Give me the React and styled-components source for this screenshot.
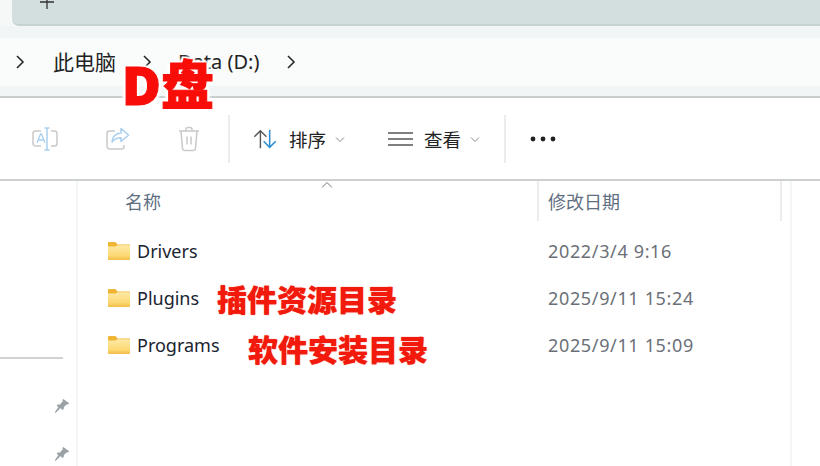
import React from 'react'
import styled, { createGlobalStyle } from 'styled-components'

const CJK = `"Noto Sans", "Noto Sans CJK SC", sans-serif`

const GlobalStyle = createGlobalStyle`
  html, body {
    margin: 0;
    padding: 0;
    background: #fff;
    overflow: hidden;
  }
  * {
    box-sizing: border-box;
  }
`

const Page = styled.div`
  position: relative;
  width: 820px;
  height: 466px;
  overflow: hidden;
  font-family: ${CJK};
  background: #fff;
`

const TabStrip = styled.div`
  height: 26px;
  padding-left: 12px;
  background: #f6f8f8;
`

const TabBody = styled.div`
  height: 26px;
  padding-left: 27px;
  overflow: hidden;
  background: #d3dedf;
  border-bottom: 2px solid #c6d1d1;
  border-bottom-left-radius: 7px;
  svg {
    display: block;
    margin-top: -6px;
  }
`

const AddressBand = styled.div`
  height: 72px;
  padding: 12px 0 10px;
  background: #f1f5f5;
  border-bottom: 2px solid #c9cdcd;
`

const AddressBar = styled.div`
  height: 48px;
  display: flex;
  align-items: center;
  padding-left: 15px;
  background: #fafcfc;
  color: #222;
`

const Crumb = styled.span`
  margin: 0 0 2px ${p => p.$left}px;
  font-size: ${p => p.$size}px;
  white-space: nowrap;
`

const Chevron = styled.svg`
  display: block;
  flex: none;
  margin-left: ${p => p.$left || 0}px;
`

const Toolbar = styled.div`
  height: 83px;
  display: flex;
  align-items: center;
  background: #fff;
  border-bottom: 2px solid #ccd0d0;
  padding-top: 1px;
`

const ToolIcon = styled.svg`
  display: block;
  flex: none;
  margin-left: ${p => p.$left}px;
`

const Sep = styled.div`
  width: 2px;
  height: 48px;
  flex: none;
  background: #ececec;
  margin-left: ${p => p.$left}px;
`

const ToolLabel = styled.span`
  margin: 0 0 1px ${p => p.$left}px;
  font-size: 18.5px;
  color: #222;
  white-space: nowrap;
`

const Main = styled.div`
  display: grid;
  grid-template-columns: 78px 1fr;
  height: 285px;
`

const Sidebar = styled.div`
  border-right: 2px solid #f4f5f6;
  padding-top: 176px;
`

const SideRule = styled.div`
  width: 63px;
  height: 2px;
  background: #d2d2d2;
`

const PinList = styled.div`
  display: flex;
  flex-direction: column;
  align-items: flex-end;
  gap: 32px;
  padding: 39px 6px 0 0;
`

const Content = styled.div`
  position: relative;
`

const Header = styled.div`
  display: grid;
  grid-template-columns: 461px 243px;
  height: 40px;
  font-size: 18px;
  color: #5f6f82;
`

const HeadCell = styled.div`
  position: relative;
  display: flex;
  align-items: center;
  padding-left: ${p => p.$pad}px;
  border-right: 2px solid #ececec;
`

const SortCaret = styled.svg`
  position: absolute;
  left: 243px;
  top: 0;
`

const RightRule = styled.div`
  position: absolute;
  left: 712px;
  top: 0;
  bottom: 0;
  width: 2px;
  background: #f4f5f6;
`

const Rows = styled.div`
  padding-top: 6px;
`

const Row = styled.div`
  position: relative;
  display: grid;
  grid-template-columns: 461px 243px;
  align-items: center;
  height: 47px;
`

const NameCell = styled.div`
  display: flex;
  align-items: center;
  gap: 7px;
  padding-left: 30px;
  font-size: 18px;
  color: #1a2430;
`

const DateCell = styled.div`
  padding-left: 9px;
  font-size: 18px;
  letter-spacing: 0.65px;
  color: #6b7078;
`

const Note = styled.div`
  position: absolute;
  left: ${p => p.$left}px;
  top: calc(50% + ${p => p.$shift}px);
  transform: translateY(-50%);
  font-size: 30px;
  font-weight: 900;
  line-height: 1;
  color: #f21a0c;
  white-space: nowrap;
  text-shadow: 0 0 1px #f21a0c;
`

const DriveTag = styled.div`
  position: absolute;
  left: 122px;
  top: 59px;
  font-size: 53px;
  font-weight: 900;
  line-height: 52px;
  color: #f80d08;
  -webkit-text-stroke: 1px #f80d08;
  white-space: nowrap;
  text-shadow: 2px 2px 2px #fff, -2px -2px 2px #fff, 2px -2px 2px #fff, -2px 2px 2px #fff, 0 3px 3px #fff, 3px 0 3px #fff, -3px 0 3px #fff;
`

function Arrow({ left }) {
  return (
    <Chevron $left={left} width="10" height="16" viewBox="0 0 10 16" fill="none">
      <path d="M2 2l6 6-6 6" stroke="#2a2a2a" strokeWidth="1.6" />
    </Chevron>
  )
}

function Caret({ left }) {
  return (
    <ToolIcon $left={left} width="10" height="7" viewBox="0 0 10 7" fill="none">
      <path d="M1 1.5l4 4 4-4" stroke="#8a8a8a" strokeWidth="1" />
    </ToolIcon>
  )
}

function Folder() {
  return (
    <svg width="22" height="18" viewBox="0 0 22 18" style={{ display: 'block', flex: 'none' }}>
      <defs>
        <linearGradient id="folderFill" x1="0" y1="0" x2="0" y2="1">
          <stop offset="0" stopColor="#fdeaa8" />
          <stop offset="0.7" stopColor="#fdd873" />
          <stop offset="1" stopColor="#f2bd48" />
        </linearGradient>
      </defs>
      <path d="M0 1.2C0 .5.5 0 1.2 0h5.6c.5 0 .9.2 1.2.6L9.4 2.400H21c.6 0 1 .4 1 1V6H0z" fill="#f0b433" />
      <path d="M0 4.400h7.600l1.800-1.200H21c.6 0 1 .4 1 1V17c0 .6-.4 1-1 1H1c-.6 0-1-.4-1-1z" fill="url(#folderFill)" />
    </svg>
  )
}

function Pin() {
  return (
    <svg width="16" height="16" viewBox="0 0 18 16" style={{ display: 'block' }}>
      <path d="M10.500 0l6.500 5-1.200 1.200-1.400-.3-3.200 3.200-.3 2.400-1.400 1-2-2.200L2 15.500 .8 15l4-5.700-1.900-1.900 1.400-1.100 2.400-.1 3.100-3.500L9.600 1z" fill="#9aa2a6" />
    </svg>
  )
}

export default function App() {
  return (
    <Page>
      <GlobalStyle />
      <TabStrip>
        <TabBody>
          <svg width="16" height="16" viewBox="0 0 16 16" fill="none">
            <path d="M8 1v14M1 8h14" stroke="#333" strokeWidth="1.3" />
          </svg>
        </TabBody>
      </TabStrip>
      <AddressBand>
        <AddressBar>
          <Arrow />
          <Crumb $left={28} $size={21}>此电脑</Crumb>
          <Arrow left={26} />
          <Crumb $left={26} $size={20}>Data (D:)</Crumb>
          <Arrow left={27} />
        </AddressBar>
      </AddressBand>
      <Toolbar>
        <ToolIcon $left={32} width="26" height="24" viewBox="0 0 26 24" fill="none">
          <path d="M9 4H3.500A2.500 2.500 0 0 0 1 6.500v10A2.500 2.500 0 0 0 3.500 19H9M19 4h3.500A2.500 2.500 0 0 1 25 6.500v10a2.500 2.500 0 0 1-2.500 2.500H19" stroke="#c9c9c9" strokeWidth="1.500" />
          <path d="M15 1v22M12.500 1h5M12.500 23h5" stroke="#a9cfee" strokeWidth="1.500" />
          <path d="M5 16l3.500-9h1l3.500 9M6.300 13h5.400" stroke="#a9cfee" strokeWidth="1.300" />
        </ToolIcon>
        <ToolIcon $left={48} width="24" height="24" viewBox="0 0 24 24" fill="none">
          <path d="M9 4H3.500A2.500 2.500 0 0 0 1 6.500v13A2.500 2.500 0 0 0 3.500 22h12a2.500 2.500 0 0 0 2.500-2.500V18" stroke="#c9c9c9" strokeWidth="1.500" />
          <path d="M15 1.500l7.500 6.500-7.500 6.500v-3.800c-4 0-6.500 1-9 4.300.5-5.500 3.500-8.700 9-9z" stroke="#a9cfee" strokeWidth="1.500" strokeLinejoin="round" />
        </ToolIcon>
        <ToolIcon $left={48} width="22" height="26" viewBox="0 0 22 26" fill="none">
          <path d="M1 5h20M8 5V3.500A2 2 0 0 1 10 1.500h2a2 2 0 0 1 2 2V5M3 5l1.500 17.500A2.200 2.200 0 0 0 6.700 24.500h8.600a2.200 2.200 0 0 0 2.200-2L19 5" stroke="#c9c9c9" strokeWidth="1.500" />
          <path d="M9 10.500v8M13 10.500v8" stroke="#c9c9c9" strokeWidth="1.500" />
        </ToolIcon>
        <Sep $left={28} />
        <ToolIcon $left={23} width="25" height="24" viewBox="0 0 27 24" fill="none">
          <path d="M8 22V3M1.500 9.500L8 3l6.500 6.500" stroke="#555" strokeWidth="1.500" />
          <path d="M18 2v19M11.500 14.500L18 21l6.500-6.500" stroke="#2f8fd8" strokeWidth="1.700" />
        </ToolIcon>
        <ToolLabel $left={11}>排序</ToolLabel>
        <Caret left={9} />
        <ToolIcon $left={43} width="25" height="16" viewBox="0 0 25 16" fill="none">
          <path d="M0 2h25M0 8h25M0 14h25" stroke="#555" strokeWidth="1.500" />
        </ToolIcon>
        <ToolLabel $left={11}>查看</ToolLabel>
        <Caret left={9} />
        <Sep $left={24} />
        <ToolIcon $left={24} width="26" height="6" viewBox="0 0 26 6">
          <circle cx="3" cy="3" r="2.400" fill="#222" />
          <circle cx="13" cy="3" r="2.400" fill="#222" />
          <circle cx="23" cy="3" r="2.400" fill="#222" />
        </ToolIcon>
      </Toolbar>
      <Main>
        <Sidebar>
          <SideRule />
          <PinList>
            <Pin />
            <Pin />
          </PinList>
        </Sidebar>
        <Content>
          <RightRule />
          <Header>
            <HeadCell $pad={47}>
              名称
              <SortCaret width="12" height="8" viewBox="0 0 12 8" fill="none">
                <path d="M1 6.500l5-5 5 5" stroke="#777" strokeWidth="1" />
              </SortCaret>
            </HeadCell>
            <HeadCell $pad={9}>修改日期</HeadCell>
          </Header>
          <Rows>
            <Row>
              <NameCell><Folder />Drivers</NameCell>
              <DateCell>2022/3/4 9:16</DateCell>
            </Row>
            <Row>
              <NameCell><Folder />Plugins</NameCell>
              <DateCell>2025/9/11 15:24</DateCell>
              <Note $left={139} $shift={2}>插件资源目录</Note>
            </Row>
            <Row>
              <NameCell><Folder />Programs</NameCell>
              <DateCell>2025/9/11 15:09</DateCell>
              <Note $left={170} $shift={5}>软件安装目录</Note>
            </Row>
          </Rows>
        </Content>
      </Main>
      <DriveTag>D盘</DriveTag>
    </Page>
  )
}
